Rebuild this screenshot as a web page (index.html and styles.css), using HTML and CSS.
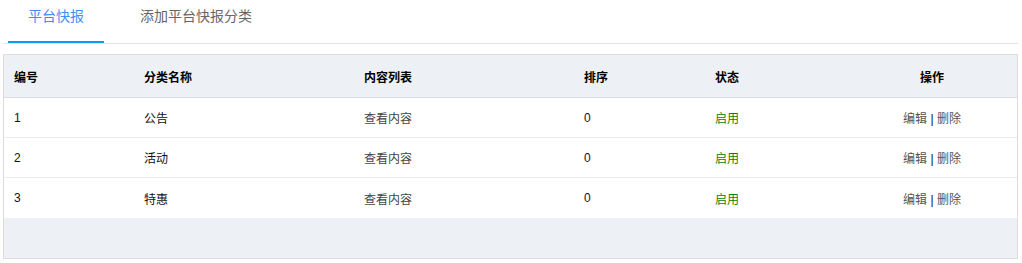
FILE: index.html
```html
<!DOCTYPE html>
<html lang="zh-CN">
<head>
<meta charset="utf-8">
<title>平台快报</title>
<link rel="stylesheet" href="styles.css">
</head>
<body>
<div class="page">
  <div class="tabs">
    <div class="tab active">平台快报</div>
    <div class="tab">添加平台快报分类</div>
  </div>
  <div class="grid-box">
    <table class="grid">
      <colgroup>
        <col class="c1"><col class="c2"><col class="c3"><col class="c4"><col class="c5"><col class="c6">
      </colgroup>
      <thead>
        <tr>
          <th>编号</th><th>分类名称</th><th>内容列表</th><th>排序</th><th>状态</th><th class="center">操作</th>
        </tr>
      </thead>
      <tbody>
        <tr>
          <td>1</td><td>公告</td><td class="muted">查看内容</td><td>0</td><td class="ok">启用</td>
          <td class="center"><span class="act">编辑</span> | <span class="act">删除</span></td>
        </tr>
        <tr>
          <td>2</td><td>活动</td><td class="muted">查看内容</td><td>0</td><td class="ok">启用</td>
          <td class="center"><span class="act">编辑</span> | <span class="act">删除</span></td>
        </tr>
        <tr>
          <td>3</td><td>特惠</td><td class="muted">查看内容</td><td>0</td><td class="ok">启用</td>
          <td class="center"><span class="act">编辑</span> | <span class="act">删除</span></td>
        </tr>
      </tbody>
    </table>
    <div class="grid-foot"></div>
  </div>
</div>
</body>
</html>
```
FILE: styles.css
```css
html, body {
  margin: 0;
  padding: 0;
  background: #fff;
}
body {
  font-family: "Liberation Sans", "Noto Sans CJK SC", sans-serif;
  color: #111;
}
.page {
  width: 1015px;
  margin-left: 3px;
}
.tabs {
  display: flex;
  gap: 16px;
  border-bottom: 1px solid #e2e2e2;
  padding-left: 5px;
}
.tab {
  font-size: 14px;
  line-height: 33px;
  padding: 0 20px 8px;
  color: #666;
  border-bottom: 2px solid transparent;
}
.tab.active {
  color: #3f8ef7;
  border-bottom-color: #0d9af5;
}
.grid-box {
  margin-top: 10px;
  border: 1px solid #dcdcdc;
  background: #edf1f5;
}
.grid {
  width: 1013px;
  border-collapse: collapse;
  table-layout: fixed;
  font-size: 12px;
}
.c1 { width: 130px; }
.c2 { width: 220px; }
.c3 { width: 220px; }
.c4 { width: 131px; }
.c5 { width: 142px; }
.c6 { width: 170px; }
.grid th {
  height: 42px;
  padding: 0 10px;
  text-align: left;
  font-weight: bold;
  color: #000;
  border-bottom: 1px solid #dadde2;
}
.grid td {
  height: 39px;
  padding: 0 10px;
  background: #fff;
  border-bottom: 1px solid #ebebeb;
  color: #111;
}
.grid tbody tr:last-child td {
  border-bottom: none;
  height: 40px;
}
.grid .center { text-align: center; }
.grid td.muted { color: #444; }
.grid td.ok { color: #0b820b; }
.act { color: #555; }
.grid-foot {
  height: 40px;
}
```
